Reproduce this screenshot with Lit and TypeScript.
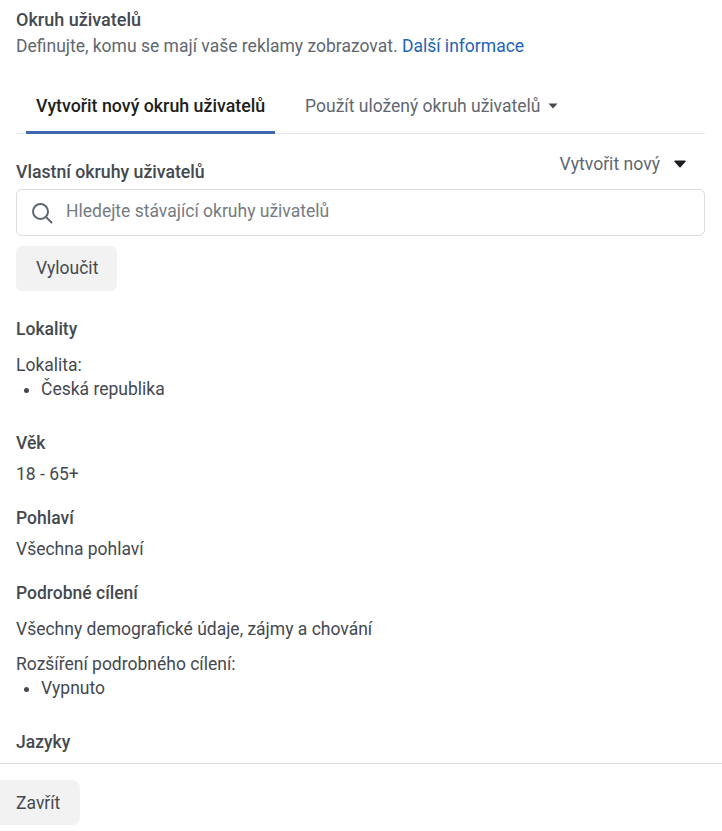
import { LitElement, html, css } from "lit";
import { customElement } from "lit/decorators.js";

@customElement("app-root")
export class AppRoot extends LitElement {
  static styles = css`
    :host { display: flex; flex-direction: column; width: 722px; height: 831px; background: #fff; overflow: hidden;
      font-family: Roboto, "Liberation Sans", sans-serif; font-size: 17.5px; color: #444950; line-height: 20px; }
    .main { flex: 1; min-height: 0; overflow: hidden; padding: 10px 17px 0 16px; }
    h1 { margin: 0; font-size: 18px; font-weight: 500; line-height: 20px; color: #444950; }
    .desc { margin-top: 6px; color: #606770; }
    .desc a { color: #1d64b8; text-decoration: none; }
    .tabs { display: flex; margin-top: 26px; border-bottom: 1px solid #e6e7ea; height: 52px; box-sizing: border-box; }
    .tab { display: flex; align-items: center; padding: 0 10px 4px; height: 100%; box-sizing: border-box; white-space: nowrap; color: #606770; }
    .tab.on { font-size: 17.8px; font-weight: 500; color: #1c1e21; border-bottom: 3px solid #4267b2; height: 52px; margin: 0 20px -1px 10px; padding-bottom: 2px; }
    .caret { margin-left: 8px; }
    .cust { display: flex; justify-content: space-between; margin-top: 19px; }
    .lbl { font-weight: 500; color: #444950; }
    .cust .lbl { margin-top: 9px; font-size: 17.7px; }
    .new { display: flex; align-items: center; gap: 14px; padding-right: 19px; height: 20px; margin-top: 1px; color: #606770; font-size: 17.6px; }
    .search { display: flex; align-items: center; gap: 13px; margin-top: 7px; height: 47px; box-sizing: border-box; padding: 0 14px; border: 1px solid #dadde1; border-radius: 6px; color: #757b82; }
    .search span { margin-bottom: 4px; }
    .btn { display: inline-flex; align-items: center; background: #f2f2f2; border-radius: 6px; height: 45px; padding: 0 20px; color: #444950; box-sizing: border-box; }
    .excl { margin-top: 10px; display: flex; }
    .excl .btn { width: 101px; padding-bottom: 2px; }
    p { margin: 0; }
    ul { margin: 4px 0 0; padding: 0 0 0 25px; }
    .foot { border-top: 1px solid #dadde1; height: 68px; box-sizing: border-box; padding-top: 16px; flex: none; }
    .foot .btn { width: 80px; padding: 0 0 0 16px; border-radius: 0 8px 8px 0; }
    .gap-28 { margin-top: 28px; }
    .gap-16 { margin-top: 16px; }
    .gap-34 { margin-top: 34px; }
    .gap-11 { margin-top: 11px; }
    .gap-24 { margin-top: 24px; }
    .gap-15 { margin-top: 15px; }
  `;

  render() {
    return html`
      <div class="main">
        <h1>Okruh uživatelů</h1>
        <div class="desc">Definujte, komu se mají vaše reklamy zobrazovat. <a href="#">Další informace</a></div>
        <div class="tabs">
          <div class="tab on">Vytvořit nový okruh uživatelů</div>
          <div class="tab">Použít uložený okruh uživatelů
            <svg class="caret" width="10" height="6" viewBox="0 0 10 6"><path d="M0.5 0.5h9L5 5.5z" fill="#444950"/></svg>
          </div>
        </div>
        <div class="cust">
          <div class="lbl">Vlastní okruhy uživatelů</div>
          <div class="new">Vytvořit nový
            <svg width="12" height="8" viewBox="0 0 12 8"><path d="M1 1.2h10L6 6.8z" fill="#1c1e21" stroke="#1c1e21" stroke-width="1.4" stroke-linejoin="round"/></svg>
          </div>
        </div>
        <div class="search">
          <svg width="22" height="22" viewBox="0 0 22 22" fill="none" stroke="#606770" stroke-width="2"><circle cx="9.5" cy="9.5" r="7.5"/><path d="M15 15l5.5 5.5" stroke-linecap="round"/></svg>
          <span>Hledejte stávající okruhy uživatelů</span>
        </div>
        <div class="excl"><div class="btn">Vyloučit</div></div>
        <div class="lbl gap-28">Lokality</div>
        <p class="gap-16">Lokalita:</p>
        <ul><li>Česká republika</li></ul>
        <div class="lbl gap-34">Věk</div>
        <p class="gap-11">18 - 65+</p>
        <div class="lbl gap-24">Pohlaví</div>
        <p class="gap-11">Všechna pohlaví</p>
        <div class="lbl gap-24">Podrobné cílení</div>
        <p class="gap-16">Všechny demografické údaje, zájmy a chování</p>
        <p class="gap-15">Rozšíření podrobného cílení:</p>
        <ul><li>Vypnuto</li></ul>
        <div class="lbl gap-34">Jazyky</div>
      </div>
      <div class="foot"><div class="btn">Zavřít</div></div>
    `;
  }
}
